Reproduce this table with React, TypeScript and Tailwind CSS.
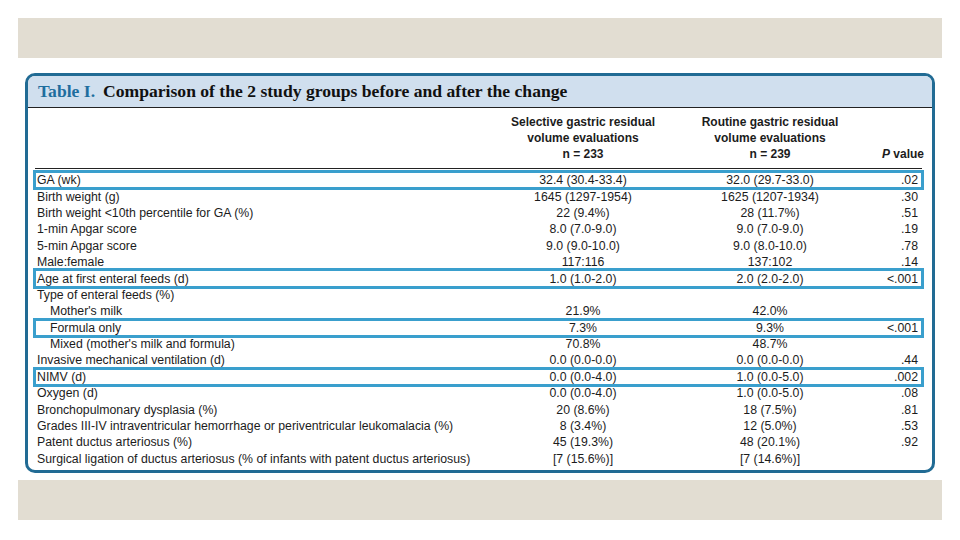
type Row = {
  label: string;
  a: string;
  b: string;
  p: string;
  indent?: boolean;
  hl?: boolean;
};

const ROWS: Row[] = [
  { label: "GA (wk)", a: "32.4 (30.4-33.4)", b: "32.0 (29.7-33.0)", p: ".02", hl: true },
  { label: "Birth weight (g)", a: "1645 (1297-1954)", b: "1625 (1207-1934)", p: ".30" },
  { label: "Birth weight <10th percentile for GA (%)", a: "22 (9.4%)", b: "28 (11.7%)", p: ".51" },
  { label: "1-min Apgar score", a: "8.0 (7.0-9.0)", b: "9.0 (7.0-9.0)", p: ".19" },
  { label: "5-min Apgar score", a: "9.0 (9.0-10.0)", b: "9.0 (8.0-10.0)", p: ".78" },
  { label: "Male:female", a: "117:116", b: "137:102", p: ".14" },
  { label: "Age at first enteral feeds (d)", a: "1.0 (1.0-2.0)", b: "2.0 (2.0-2.0)", p: "<.001", hl: true },
  { label: "Type of enteral feeds (%)", a: "", b: "", p: "" },
  { label: "Mother's milk", a: "21.9%", b: "42.0%", p: "", indent: true },
  { label: "Formula only", a: "7.3%", b: "9.3%", p: "<.001", indent: true, hl: true },
  { label: "Mixed (mother's milk and formula)", a: "70.8%", b: "48.7%", p: "", indent: true },
  { label: "Invasive mechanical ventilation (d)", a: "0.0 (0.0-0.0)", b: "0.0 (0.0-0.0)", p: ".44" },
  { label: "NIMV (d)", a: "0.0 (0.0-4.0)", b: "1.0 (0.0-5.0)", p: ".002", hl: true },
  { label: "Oxygen (d)", a: "0.0 (0.0-4.0)", b: "1.0 (0.0-5.0)", p: ".08" },
  { label: "Bronchopulmonary dysplasia (%)", a: "20 (8.6%)", b: "18 (7.5%)", p: ".81" },
  {
    label: "Grades III-IV intraventricular hemorrhage or periventricular leukomalacia (%)",
    a: "8 (3.4%)",
    b: "12 (5.0%)",
    p: ".53",
  },
  { label: "Patent ductus arteriosus (%)", a: "45 (19.3%)", b: "48 (20.1%)", p: ".92" },
  {
    label: "Surgical ligation of ductus arteriosus (% of infants with patent ductus arteriosus)",
    a: "[7 (15.6%)]",
    b: "[7 (14.6%)]",
    p: "",
  },
];

function DataRow({ row }: { row: Row }) {
  return (
    <div
      className={
        "grid h-[16.4px] grid-cols-[453px_186px_188px_54px] items-center pl-[2px] leading-[16px] " +
        (row.hl ? "outline-3 outline-offset-[-1px] outline-[#3a9fcd]" : "")
      }
    >
      <div className={"whitespace-nowrap " + (row.indent ? "pl-[13px]" : "")}>{row.label}</div>
      <div className="text-center">{row.a}</div>
      <div className="text-center">{row.b}</div>
      <div className="text-right">{row.p}</div>
    </div>
  );
}

export default function App() {
  return (
    <div className="flex h-[540px] w-[960px] flex-col bg-white pt-[18px]">
      <div className="mx-[18px] h-[40px] bg-[#e2ddd2]" />

      <div className="mx-[25px] mt-[15px] flex h-[400px] flex-col overflow-hidden rounded-[10px] border-[3px] border-[#216b94] bg-white">
        <div className="flex h-[32px] items-center border-b border-[#222] bg-[#d0dfee] pl-[10px] font-['Liberation_Serif',serif] text-[17.6px] font-bold text-[#111]">
          <span className="text-[#1f6e9e]">Table I.</span>
          <span className="ml-[8px]">Comparison of the 2 study groups before and after the change</span>
        </div>

        <div className="ml-[7px] mr-[10px] font-['Liberation_Sans',sans-serif] text-[#1c1c1c]">
          <div className="grid grid-cols-[455px_186px_188px_60px] border-b border-[#222] pt-[6px] pb-[6px] text-[12px] font-bold leading-[16px]">
            <div />
            <div className="text-center">
              Selective gastric residual
              <br />
              volume evaluations
              <br />n = 233
            </div>
            <div className="text-center">
              Routine gastric residual
              <br />
              volume evaluations
              <br />n = 239
            </div>
            <div className="flex items-end justify-end">
              <span>
                <span className="italic">P</span> value
              </span>
            </div>
          </div>

          <div className="pt-[3px] text-[12.3px]">
            {ROWS.map((r) => (
              <DataRow key={r.label} row={r} />
            ))}
          </div>
        </div>
      </div>

      <div className="mx-[18px] mt-[7px] h-[40px] bg-[#e2ddd2]" />
    </div>
  );
}
